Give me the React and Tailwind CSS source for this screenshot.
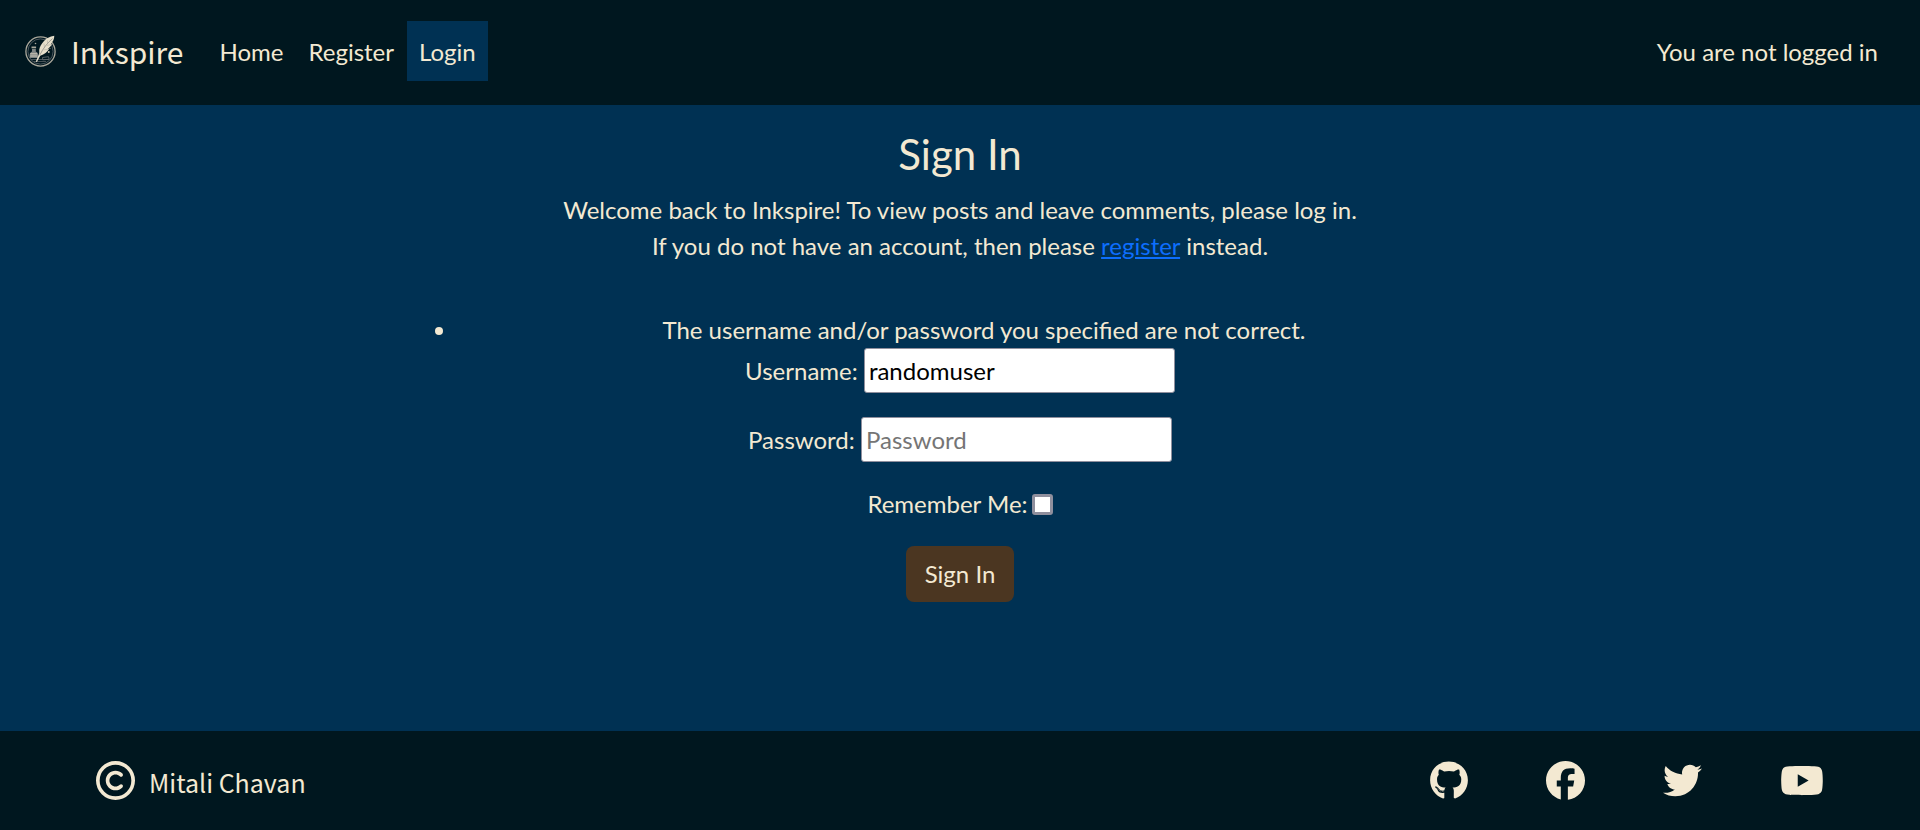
import React from "react";
import { FaFacebook, FaGithub, FaRegCopyright, FaTwitter, FaYoutube } from "react-icons/fa6";

function Logo() {
  return (
    <svg viewBox="0 0 32 32" className="size-8 shrink-0" aria-hidden="true" fill="none">
      <circle cx="15.5" cy="16.5" r="14.6" stroke="#a9a79b" strokeWidth="1.3" />
      <circle cx="15.5" cy="16.5" r="12.6" stroke="#5d666b" strokeWidth="0.8" />
      <path d="M6 24.5h18M9 26.5h12" stroke="#4f595e" strokeWidth="0.9" />
      <path d="M17.500 22.500l6-.8.700 2.600-6.500.6z" stroke="#5d666b" strokeWidth="0.9" />
      <path d="M6.500 11.500h4.600v1.800H6.500z" fill="#a9a79b" />
      <path d="M7 14h3.800v2.600c1.700.8 2.700 2.200 2.700 4v2.300H4.600v-2.300c0-1.800.8-3.200 2.400-4z" fill="#7f8483" />
      <path d="M5.200 18.800h6.800M5.200 21h7" stroke="#d8d2c0" strokeWidth="0.9" />
      <circle cx="10.500" cy="8.500" r="0.800" fill="#a9a79b" />
      <circle cx="23.800" cy="17" r="0.900" fill="#d8d2c0" />
      <circle cx="25" cy="13.500" r="0.500" fill="#a9a79b" />
      <path
        d="M29.300.8c-4.600.6-8.200 2.600-10.500 5.500-2.200 2.600-4.200 5.500-4.500 8.300-.2 1.600.2 2.700-.2 4.400l-3.300 7.600 1.100.4 3.300-6.300c4.200-1.300 7.200-3.700 9-6.900l-1.400.2c2-1.500 3.500-3.300 4.200-5.300l-1.100.3C28 6.600 29.300 4 29.300.8z"
        fill="#e6dfcb"
      />
      <path d="M27.500 3.500c-5.200 4.600-9.500 10-12.600 16.400" stroke="#8b8d86" strokeWidth="0.8" />
      <path d="M22.500 8.500v-3M19.500 12l-.6-3.500M22 10.500l4-1M18.500 15l4.500-.8" stroke="#aaa99e" strokeWidth="0.5" />
    </svg>
  );
}

const navLinks = [
  { label: "Home", active: false },
  { label: "Register", active: false },
  { label: "Login", active: true },
];

const socials = [
  { label: "GitHub", Icon: FaGithub, size: "h-[39px] w-[38px]" },
  { label: "Facebook", Icon: FaFacebook, size: "h-[39px] w-[39px]" },
  { label: "Twitter", Icon: FaTwitter, size: "h-[39px] w-[39px]" },
  { label: "YouTube", Icon: FaYoutube, size: "h-[39px] w-[44px]" },
];

function Header() {
  return (
    <header className="flex items-center bg-[#00171f] pt-[21px] pr-6 pb-6 pl-[25px]">
      <a
        href="#"
        className="mr-6 flex items-center gap-[14px] font-['Noto_Sans_CJK_JP',sans-serif] text-[30px] leading-12"
      >
        <Logo />
        Inkspire
      </a>
      <nav className="flex gap-px">
        {navLinks.map(({ label, active }) => (
          <a
            key={label}
            href="#"
            aria-current={active ? "page" : undefined}
            className={active ? "bg-[#003153] px-3 pt-[13px] pb-[11px]" : "px-3 pt-[13px] pb-[11px]"}
          >
            {label}
          </a>
        ))}
      </nav>
      <p className="ml-auto pt-[2px] pr-[18px]">You are not logged in</p>
    </header>
  );
}

const fieldClass =
  "w-[311px] rounded-[3px] border border-[#8f8f9d] bg-white px-1 pt-1 pb-[3px] leading-9 text-black placeholder:text-[#757575]";

function SignIn() {
  return (
    <main className="mx-auto w-full max-w-[1100px] grow pt-6 text-center">
      <h1 className="mb-[13px] text-[42px] leading-[50px]">Sign In</h1>
      <p>
        Welcome back to Inkspire! To view posts and leave comments, please log in.
        <br />
        If you do not have an account, then please{" "}
        <a href="#" className="text-[#0d6efd] underline">
          register
        </a>{" "}
        instead.
      </p>
      <form className="mt-12" onSubmit={(e) => e.preventDefault()}>
        <ul className="list-disc pl-12" role="alert">
          <li>The username and/or password you specified are not correct.</li>
        </ul>
        <div className="mb-6">
          <label htmlFor="username">Username:</label>{" "}
          <input id="username" type="text" placeholder="Username" defaultValue="randomuser" className={fieldClass} />
        </div>
        <div className="mb-6">
          <label htmlFor="password">Password:</label>{" "}
          <input id="password" type="password" placeholder="Password" className={fieldClass} />
        </div>
        <div className="mb-6 flex items-center justify-center gap-1">
          <label htmlFor="remember">Remember Me:</label>
          <input
            id="remember"
            type="checkbox"
            className="size-[21px] appearance-none rounded-[3px] border-3 border-[#8f8f9d] bg-white checked:bg-[#0d6efd]"
          />
        </div>
        <button type="submit" className="rounded-lg bg-[#4b3621] px-[19px] py-[10px]">
          Sign In
        </button>
      </form>
    </main>
  );
}

function Footer() {
  return (
    <footer className="flex items-center justify-between bg-[#00171f] px-24 py-[30px]">
      <p className="flex items-center gap-[14px] font-['Noto_Sans_CJK_JP',sans-serif] text-[25px] leading-[39px]">
        <FaRegCopyright className="size-[39px]" aria-hidden="true" />
        <span className="pt-[3px] leading-9">Mitali Chavan</span>
      </p>
      <div className="flex gap-[78px]">
        {socials.map(({ label, Icon, size }) => (
          <a key={label} href="#" aria-label={label}>
            <Icon className={size} />
          </a>
        ))}
      </div>
    </footer>
  );
}

export default function App() {
  return (
    <div className="flex min-h-screen flex-col bg-[#003153] font-[Lato,sans-serif] text-2xl leading-9 text-[#f3e9d2]">
      <Header />
      <SignIn />
      <Footer />
    </div>
  );
}
